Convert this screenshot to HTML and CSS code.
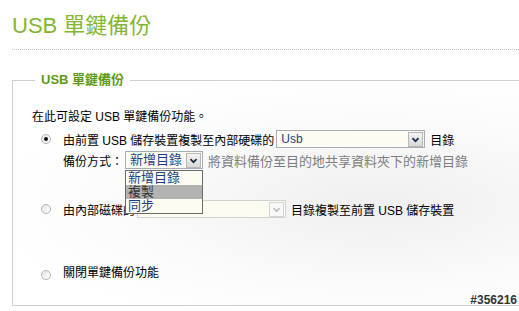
FILE: index.html
```html
<!DOCTYPE html>
<html lang="zh-Hant">
<head>
  <meta charset="UTF-8">
  <title>USB 單鍵備份</title>
  <link rel="stylesheet" href="styles.css">
</head>
<body>
  <div class="page">
    <h1 class="page-title">USB 單鍵備份</h1>

    <fieldset class="box">
      <legend>USB 單鍵備份</legend>
      <p class="intro">在此可設定 USB 單鍵備份功能。</p>

      <div class="option first">
        <div class="row">
          <span class="radio checked"></span>
          <span>由前置 USB 儲存裝置複製至內部硬碟的</span>
          <span class="select wide">
            <span class="select-text">Usb</span>
            <span class="arrow"><svg viewBox="0 0 15 15"><path d="M4 6 L7.5 9.5 L11 6"/></svg></span>
          </span>
          <span>目錄</span>
        </div>
        <div class="row sub">
          <span>備份方式：</span>
          <span class="select method">
            <span class="select-text">新增目錄</span>
            <span class="arrow"><svg viewBox="0 0 15 15"><path d="M4 6 L7.5 9.5 L11 6"/></svg></span>
            <ul class="dropdown">
              <li>新增目錄</li>
              <li class="active">複製</li>
              <li>同步</li>
            </ul>
          </span>
          <span class="hint">將資料備份至目的地共享資料夾下的新增目錄</span>
        </div>
      </div>

      <div class="option second">
        <div class="row">
          <span class="radio"></span>
          <span>由內部磁碟的</span>
          <span class="select wide disabled">
            <span class="select-text">Usb</span>
            <span class="arrow"><svg viewBox="0 0 15 15"><path d="M4 6 L7.5 9.5 L11 6"/></svg></span>
          </span>
          <span>目錄複製至前置 USB 儲存裝置</span>
        </div>
      </div>

      <div class="option third">
        <div class="row">
          <span class="radio low"></span>
          <span>關閉單鍵備份功能</span>
        </div>
      </div>
    </fieldset>

    <div class="stamp">#356216</div>
  </div>
</body>
</html>
```

FILE: styles.css
```css
* { box-sizing: border-box; }

body {
  margin: 0;
  background: #fff;
  font-family: 'Liberation Sans', 'Noto Sans CJK TC', sans-serif;
  font-size: 12px;
  color: #000;
  overflow: hidden;
}

.page {
  position: relative;
  padding-left: 12px;
  height: 311px;
}

.page-title {
  margin: 0;
  padding: 13px 0 10px;
  font-size: 22px;
  line-height: 26px;
  font-weight: normal;
  color: #84b634;
  border-bottom: 1px dotted #c8c8c8;
}

.box {
  margin: 23px 0 0;
  padding: 0 0 0 19px;
  width: 507px;
  height: 233px;
  border: 1px solid #cfcfcf;
  border-right: none;
  background: radial-gradient(ellipse at 72% 55%, #efefef 0%, #fafafa 45%, #fff 75%);
}

.box legend {
  margin-left: 3px;
  padding: 0 6px;
  font-size: 13px;
  line-height: 14px;
  font-weight: bold;
  color: #5f9a16;
}

.intro {
  margin: 22px 0 0;
  line-height: 16px;
}

.option.first { margin-top: 5px; }
.option.second { margin-top: 31px; }
.option.third { margin-top: 44px; }

.row {
  display: flex;
  align-items: center;
  height: 18px;
  white-space: nowrap;
}

.row.sub {
  margin-top: 3px;
  padding-left: 31px;
}

.radio {
  width: 10px;
  height: 10px;
  margin: 0 12px 0 9px;
  border: 1px solid #b4b4b4;
  border-radius: 50%;
  background: linear-gradient(135deg, #e6e6e6, #fff);
  position: relative;
}

.radio.checked::after {
  content: '';
  position: absolute;
  left: 2px;
  top: 2px;
  width: 4px;
  height: 4px;
  border-radius: 50%;
  background: #111;
}

.radio.low { margin-top: 8px; }

.select {
  position: relative;
  display: flex;
  align-items: center;
  height: 18px;
  margin: 0 5px 0 2px;
  border: 1px solid #a5acb2;
  background: #fdfcf2;
  color: #1f3c7a;
}

.select.wide { width: 149px; }
.select.method { width: 78px; font-size: 13px; }

.select-text {
  flex: 1;
  padding-left: 4px;
  line-height: 16px;
}

.arrow {
  width: 15px;
  height: 15px;
  margin-right: 1px;
  border: 1px solid #b7b7b7;
  background: linear-gradient(#f4f4f4, #d8d8d8);
}

.arrow svg {
  display: block;
  width: 13px;
  height: 13px;
  fill: none;
  stroke: #1d2a44;
  stroke-width: 2;
}

.select.disabled {
  border-color: #d2d2d2;
  color: #9a9a9a;
}

.select.disabled .arrow {
  border-color: #d4d4d4;
  background: #f8f8f8;
}

.select.disabled .arrow svg { stroke: #b4b4b4; stroke-width: 1.5; }

.hint {
  font-size: 13px;
  color: #7d7d7d;
}

.dropdown {
  position: absolute;
  left: -1px;
  top: 18px;
  width: 78px;
  margin: 0;
  padding: 0;
  list-style: none;
  border: 1px solid #6a6a6a;
  background: #fdfcf2;
  z-index: 2;
}

.dropdown li {
  padding-left: 2px;
  font-size: 13px;
  line-height: 14px;
  height: 14px;
  color: #1f3c7a;
}

.dropdown li.active {
  background: #b3b3b3;
  color: #333;
}

.stamp {
  position: absolute;
  right: 2px;
  top: 293px;
  font-size: 12px;
  font-weight: bold;
  color: #333;
  text-shadow: 1px 0 #fff, -1px 0 #fff, 0 1px #fff, 0 -1px #fff;
}
```
